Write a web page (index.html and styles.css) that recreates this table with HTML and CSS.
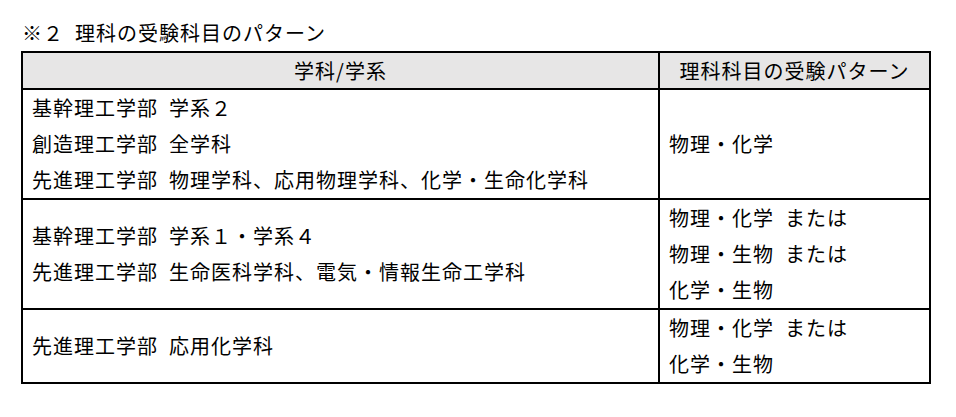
FILE: index.html
```html
<!DOCTYPE html>
<html lang="ja">
<head>
<meta charset="utf-8">
<title>理科の受験科目のパターン</title>
<link rel="stylesheet" href="styles.css">
</head>
<body>
<div class="page">
  <div class="title">※２&ensp;理科の受験科目のパターン</div>
  <table class="grid">
    <colgroup>
      <col class="c1">
      <col class="c2">
    </colgroup>
    <thead>
      <tr>
        <th>学科/学系</th>
        <th>理科科目の受験パターン</th>
      </tr>
    </thead>
    <tbody>
      <tr>
        <td>基幹理工学部&ensp;学系２<br>創造理工学部&ensp;全学科<br>先進理工学部&ensp;物理学科、応用物理学科、化学・生命化学科</td>
        <td>物理・化学</td>
      </tr>
      <tr>
        <td>基幹理工学部&ensp;学系１・学系４<br>先進理工学部&ensp;生命医科学科、電気・情報生命工学科</td>
        <td>物理・化学&ensp;または<br>物理・生物&ensp;または<br>化学・生物</td>
      </tr>
      <tr>
        <td>先進理工学部&ensp;応用化学科</td>
        <td>物理・化学&ensp;または<br>化学・生物</td>
      </tr>
    </tbody>
  </table>
</div>
</body>
</html>
```
FILE: styles.css
```css
html, body {
  margin: 0;
  padding: 0;
  background: #fff;
}
body {
  font-family: "Noto Sans CJK JP", "Noto Sans", sans-serif;
  color: #000;
  font-size: 20px;
  letter-spacing: 1px;
}
.page {
  padding: 15px 0 0 21px;
}
.title {
  line-height: 36px;
  height: 36px;
  padding-left: 1px;
}
.grid {
  border-collapse: collapse;
  table-layout: fixed;
  width: 908px;
}
.c1 { width: 637px; }
.c2 { width: 271px; }
.grid th,
.grid td {
  border: 2px solid #000;
  padding: 0 9px;
  vertical-align: middle;
}
.grid th {
  background: #e7e6e6;
  font-weight: normal;
  text-align: center;
  line-height: 35px;
}
.grid td {
  line-height: 36px;
  text-align: left;
}
```
